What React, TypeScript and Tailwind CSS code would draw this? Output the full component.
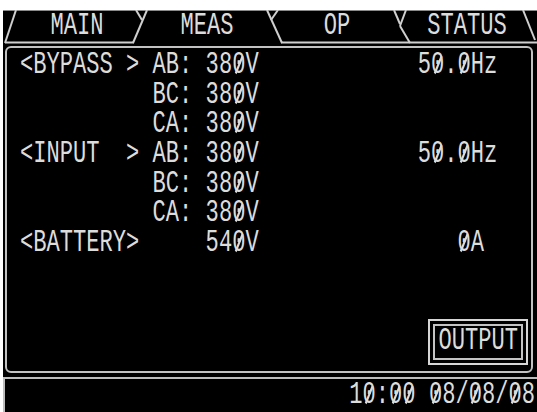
import React from "react";

const face = "font-['Liberation_Mono','DejaVu_Sans_Mono',monospace] text-[22.1px] leading-[18px] text-[#dcdcdc] whitespace-pre";

// the display draws its zeros with a slash through them
function Zero() {
  return (
    <span className="relative">
      0
      <span className="absolute left-1/2 top-[calc(50%-1px)] w-[1.6px] h-[14px] bg-current -translate-x-1/2 -translate-y-1/2 rotate-[30deg]" />
    </span>
  );
}

// tall, narrow character cell of the panel display
function Cell({ text }: { text: string }) {
  const parts = text.split("0");
  return (
    <div className={`${face} scale-y-[1.45]`}>
      {parts.map((p, i) => (
        <React.Fragment key={i}>
          {i > 0 && <Zero />}
          {p}
        </React.Fragment>
      ))}
    </div>
  );
}

// lays fields out on the character grid of the panel display
const line = (label: string, value = "", right = "", rightCol = 30) =>
  (label.padEnd(10) + value).padEnd(right ? rightCol : 0) + right;

const rows = [
  line("<BYPASS >", "AB: 380V", "50.0Hz"),
  line("", "BC: 380V"),
  line("", "CA: 380V"),
  line("<INPUT  >", "AB: 380V", "50.0Hz"),
  line("", "BC: 380V"),
  line("", "CA: 380V"),
  line("<BATTERY>", "    540V", "0A", 33),
];

const tabs = ["MAIN", "MEAS", "OP", "STATUS"];

function TabLines() {
  return (
    <svg
      className="absolute left-0 top-0 pointer-events-none"
      width={534}
      height={36}
      viewBox="0 0 534 36"
      fill="none"
      stroke="#cfcfcf"
      strokeWidth={2}
    >
      <line x1={0} y1={0.5} x2={534} y2={0.5} stroke="#8a8a8a" strokeWidth={1} />
      {/* MAIN */}
      <line x1={2} y1={33} x2={13} y2={0} />
      <line x1={2} y1={32.5} x2={131} y2={32.5} />
      <line x1={133} y1={0} x2={139} y2={10} />
      {/* MEAS (selected, open at the bottom) */}
      <line x1={144} y1={0} x2={130} y2={33} />
      <line x1={264} y1={0} x2={279} y2={33} />
      {/* OP */}
      <line x1={275} y1={0} x2={268} y2={10} />
      <line x1={278} y1={32.5} x2={534} y2={32.5} />
      <line x1={391} y1={0} x2={397} y2={14} />
      {/* STATUS */}
      <line x1={403} y1={0} x2={397} y2={16} />
      <line x1={397} y1={16} x2={407} y2={33} />
      <line x1={520} y1={0} x2={532} y2={30} />
    </svg>
  );
}

export default function App() {
  return (
    <div className="w-[537px] h-[412px] bg-white pt-[10px] pl-[3px] overflow-hidden">
      <div className="relative flex flex-col w-[534px] h-[402px] bg-black">
        {/* tab row */}
        <div className="relative h-[34px] shrink-0">
          <TabLines />
          <div className="grid grid-cols-4 w-[520px] ml-[9px] h-full">
            {tabs.map((t) => (
              <div key={t} className="flex items-center justify-center">
                <Cell text={t} />
              </div>
            ))}
          </div>
        </div>

        {/* measurement panel */}
        <div className="mt-[2px] ml-[2px] w-[528px] h-[327px] shrink-0 border-2 border-[#c2c2c2] rounded-[6px] flex flex-col pl-[13px] pt-[3px]">
          <div>
            {rows.map((r, i) => (
              <div key={i} className="h-[29.7px] flex items-center">
                <Cell text={r} />
              </div>
            ))}
          </div>
          <div className="mt-auto self-end mr-[3px] mb-[6px] border-2 border-[#d6d6d6] p-[3px]">
            <div className="border-2 border-[#c4c4c4] h-[36px] px-[3px] flex items-center">
              <Cell text="OUTPUT" />
            </div>
          </div>
        </div>

        {/* clock bar */}
        <div className="mt-[4px] flex-1 border-t-2 border-l-2 border-[#bdbdbd] flex items-center justify-end pr-[2px]">
          <Cell text="10:00 08/08/08" />
        </div>
      </div>
    </div>
  );
}
